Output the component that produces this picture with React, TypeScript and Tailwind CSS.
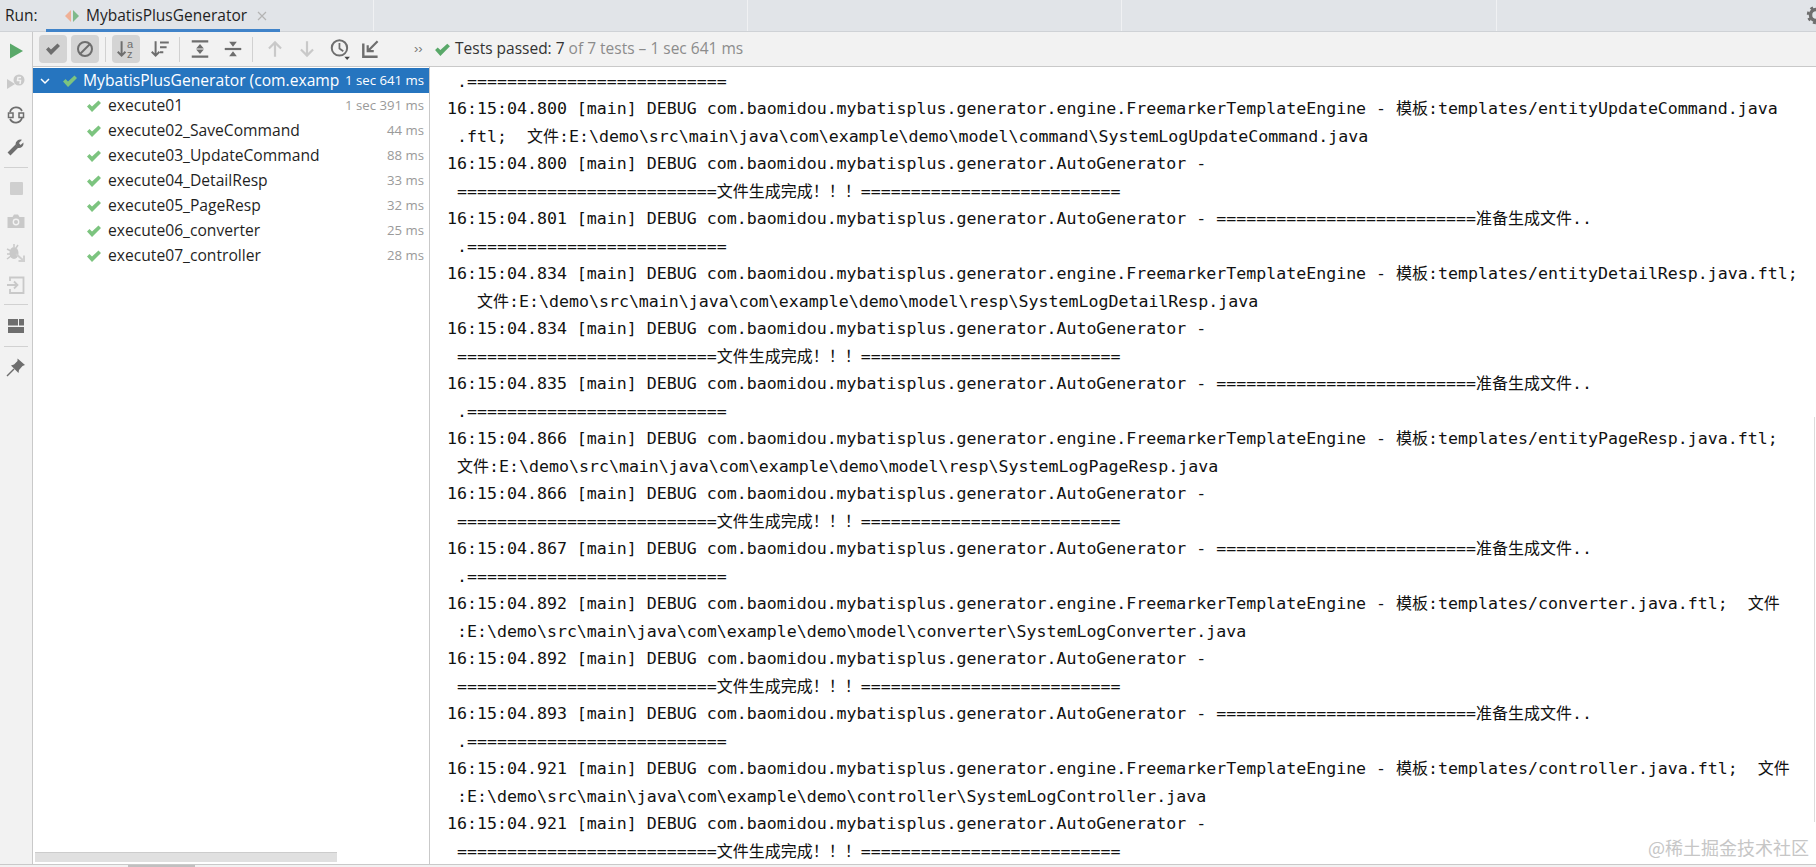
import React from 'react';

const EQ = '='.repeat(26);
const PKG = '[main] DEBUG com.baomidou.mybatisplus.generator';

const engine = (time: string, rest: string) =>
  `16:15:04.${time} ${PKG}.engine.FreemarkerTemplateEngine - 模板:templates/${rest}`;
const auto = (time: string) => `16:15:04.${time} ${PKG}.AutoGenerator - `;
const done = ` ${EQ}文件生成完成！！！${EQ}`;
const prepare = (time: string) => `16:15:04.${time} ${PKG}.AutoGenerator - ${EQ}准备生成文件..`;
const dots = ` .${EQ}`;

const LOG_LINES: string[] = [
  dots,
  engine('800', 'entityUpdateCommand.java'),
  ' .ftl;  文件:E:\\demo\\src\\main\\java\\com\\example\\demo\\model\\command\\SystemLogUpdateCommand.java',
  auto('800'),
  done,
  prepare('801'),
  dots,
  engine('834', 'entityDetailResp.java.ftl;'),
  '   文件:E:\\demo\\src\\main\\java\\com\\example\\demo\\model\\resp\\SystemLogDetailResp.java',
  auto('834'),
  done,
  prepare('835'),
  dots,
  engine('866', 'entityPageResp.java.ftl;'),
  ' 文件:E:\\demo\\src\\main\\java\\com\\example\\demo\\model\\resp\\SystemLogPageResp.java',
  auto('866'),
  done,
  prepare('867'),
  dots,
  engine('892', 'converter.java.ftl;  文件'),
  ' :E:\\demo\\src\\main\\java\\com\\example\\demo\\model\\converter\\SystemLogConverter.java',
  auto('892'),
  done,
  prepare('893'),
  dots,
  engine('921', 'controller.java.ftl;  文件'),
  ' :E:\\demo\\src\\main\\java\\com\\example\\demo\\controller\\SystemLogController.java',
  auto('921'),
  done,
];

const TESTS: [string, string][] = [
  ['execute01', '1 sec 391 ms'],
  ['execute02_SaveCommand', '44 ms'],
  ['execute03_UpdateCommand', '88 ms'],
  ['execute04_DetailResp', '33 ms'],
  ['execute05_PageResp', '32 ms'],
  ['execute06_converter', '25 ms'],
  ['execute07_controller', '28 ms'],
];

const Check = ({ size = 16, color = '#59a869' }: { size?: number; color?: string }) => (
  <svg width={size} height={size} viewBox="0 0 16 16" className="shrink-0">
    <path d="M1 8.5 L3.5 6 L6 8.5 L12.5 2.5 L15 5 L6 14 Z" fill={color} />
  </svg>
);

const Icon = ({ children, w = 20 }: { children: React.ReactNode; w?: number }) => (
  <svg width={w} height={w} viewBox="0 0 20 20" fill="none" className="shrink-0">
    {children}
  </svg>
);

const GRAY = '#6e6e6e';
const FADED = '#c9c9c9';

const Divider = () => <div className="w-6 h-px bg-[#d1d1d1]" />;
const ToolDivider = () => <div className="w-px h-[25px] bg-[#d1d1d1] shrink-0" />;

// log text is mono, the CJK runs come out a bit smaller in the original
const LogLine = ({ text }: { text: string }) => (
  <div className="whitespace-pre text-[16.6px] leading-[27.5px] text-[#111] font-['DejaVu_Sans_Mono','Noto_Sans_CJK_SC',monospace]">
    {text.split(/([\u4e00-\u9fff！]+)/).map((part, i) =>
      i % 2 === 1 ? (
        <span key={i} className="text-[16px]">
          {part}
        </span>
      ) : (
        part
      )
    )}
  </div>
);

const SideBar = () => (
  <div className="w-[33px] shrink-0 bg-[#f2f2f2] border-r border-[#c9c9c9] flex flex-col items-center pt-[2px]">
    <div className="h-[33px] flex items-center">
      <Icon><path d="M4 2.5 L17 10 L4 17.5 Z" fill="#59a869" /></Icon>
    </div>
    <div className="h-[32px] flex items-center">
      <Icon>
        <path d="M1 6 L9 11 L1 16 Z" fill={FADED} />
        <circle cx="13" cy="7" r="5.5" fill={FADED} />
        <path d="M15 4.5 L12 4.5 L11.5 7.5 L14.5 7.5 L14 11" stroke="#f2f2f2" strokeWidth="1.5" />
      </Icon>
    </div>
    <div className="h-[32px] flex items-center">
      <Icon>
        <path d="M4 7 A6.5 6.5 0 0 1 16 6" stroke={GRAY} strokeWidth="1.8" />
        <path d="M16 13 A6.5 6.5 0 0 1 4 14" stroke={GRAY} strokeWidth="1.8" />
        <rect x="2.5" y="8" width="4.5" height="4.5" stroke={GRAY} strokeWidth="1.5" />
        <rect x="13" y="8" width="4.5" height="4.5" stroke={GRAY} strokeWidth="1.5" />
      </Icon>
    </div>
    <div className="h-[32px] flex items-center">
      <Icon>
        <path d="M3 17 L11 9" stroke={GRAY} strokeWidth="4" />
        <path d="M9.5 7.5 A4.8 4.8 0 0 1 16 2.8 L13 6 L14.5 8 L17.5 5.5 A4.8 4.8 0 0 1 12 11 Z" fill={GRAY} />
      </Icon>
    </div>
    <div className="my-[4px]"><Divider /></div>
    <div className="h-[32px] flex items-center">
      <div className="w-[13px] h-[13px] bg-[#cfcfcf] rounded-[1px]" />
    </div>
    <div className="h-[33px] flex items-center">
      <Icon>
        <path d="M1.5 6 H6.5 L8 3.5 H12 L13.5 6 H18.5 V17 H1.5 Z" fill={FADED} />
        <circle cx="10" cy="11" r="3.4" fill="#f2f2f2" />
        <circle cx="10" cy="11" r="2" fill={FADED} />
      </Icon>
    </div>
    <div className="h-[32px] flex items-center">
      <Icon>
        <ellipse cx="8" cy="10" rx="4.5" ry="6" fill={FADED} />
        <path d="M1 6 L5 8 M1 11 H4 M1 16 L5 13 M8 1 V4 M12 2 L10 5" stroke={FADED} strokeWidth="1.5" />
        <path d="M10 11 L18 18 M18 12.5 V18 H12.5" stroke="#d0d0d0" strokeWidth="2" />
      </Icon>
    </div>
    <div className="h-[32px] flex items-center">
      <Icon>
        <path d="M4 6 V2.5 H17.5 V18 H4 V14" stroke={FADED} strokeWidth="1.8" />
        <path d="M1 10 H11 M8 6.5 L11.5 10 L8 13.5" stroke={FADED} strokeWidth="1.8" />
      </Icon>
    </div>
    <div className="my-[3px]"><Divider /></div>
    <div className="h-[36px] flex items-center">
      <Icon>
        <rect x="2" y="3" width="10" height="6.5" fill={GRAY} />
        <rect x="13" y="3" width="5" height="6.5" fill={GRAY} />
        <rect x="2" y="11" width="16" height="6" fill={GRAY} />
      </Icon>
    </div>
    <div className="my-[2px]"><Divider /></div>
    <div className="h-[36px] flex items-center">
      <Icon>
        <path d="M11.5 1.5 L19 8 L16.5 9 L13 13 L12.5 16 L5 8.5 L8 7.5 L11.5 4 Z" fill={GRAY} />
        <path d="M1 19 L8 12" stroke={GRAY} strokeWidth="1.5" />
      </Icon>
    </div>
  </div>
);

const ToolBar = () => (
  <div className="h-[35px] bg-[#f2f2f2] border-b border-[#c9c9c9] flex items-center pl-[6px] shrink-0">
    <div className="w-[28px] h-[28px] rounded-[4px] bg-[#d4d4d4] flex items-center justify-center">
      <Check size={16} color={GRAY} />
    </div>
    <div className="w-[28px] h-[28px] rounded-[4px] bg-[#d4d4d4] flex items-center justify-center ml-[4px]">
      <Icon>
        <circle cx="10" cy="10" r="7" stroke={GRAY} strokeWidth="2" />
        <path d="M5 15 L15 5" stroke={GRAY} strokeWidth="2" />
      </Icon>
    </div>
    <div className="ml-[6px] mr-[6px]"><ToolDivider /></div>
    <div className="w-[28px] h-[28px] rounded-[4px] bg-[#d4d4d4] flex items-center justify-center">
      <Icon w={22}>
        <path d="M6 3 V16 M2.5 12.5 L6 16 L9.5 12.5" stroke={GRAY} strokeWidth="1.8" />
        <text x="11" y="9" fontSize="10" fill={GRAY} fontFamily="'Liberation Sans', sans-serif">a</text>
        <text x="11" y="18" fontSize="10" fill={GRAY} fontFamily="'Liberation Sans', sans-serif">z</text>
      </Icon>
    </div>
    <div className="w-[28px] h-[28px] flex items-center justify-center ml-[6px]">
      <Icon w={22}>
        <path d="M6 3 V16 M2.5 12.5 L6 16 L9.5 12.5" stroke={GRAY} strokeWidth="1.8" />
        <path d="M10 4 H18 M10 8.5 H16 M10 13 H13" stroke={GRAY} strokeWidth="1.8" />
      </Icon>
    </div>
    <div className="ml-[5px] mr-[6px]"><ToolDivider /></div>
    <div className="w-[28px] h-[28px] flex items-center justify-center">
      <Icon w={22}>
        <path d="M2.5 3 H17.5 M2.5 17 H17.5" stroke={GRAY} strokeWidth="2" />
        <path d="M10 5.5 L6.5 9.5 H13.5 Z M10 14.5 L6.5 10.5 H13.5 Z" fill={GRAY} />
      </Icon>
    </div>
    <div className="w-[28px] h-[28px] flex items-center justify-center ml-[5px]">
      <Icon w={22}>
        <path d="M2.5 10 H17.5" stroke={GRAY} strokeWidth="2" />
        <path d="M10 8 L6.5 3.5 H13.5 Z M10 12 L6.5 16.5 H13.5 Z" fill={GRAY} />
      </Icon>
    </div>
    <div className="ml-[5px] mr-[8px]"><ToolDivider /></div>
    <div className="w-[28px] h-[28px] flex items-center justify-center">
      <Icon w={22}>
        <path d="M10 17 V4 M4.5 9.5 L10 4 L15.5 9.5" stroke={FADED} strokeWidth="2" />
      </Icon>
    </div>
    <div className="w-[28px] h-[28px] flex items-center justify-center ml-[4px]">
      <Icon w={22}>
        <path d="M10 3 V16 M4.5 10.5 L10 16 L15.5 10.5" stroke={FADED} strokeWidth="2" />
      </Icon>
    </div>
    <div className="w-[28px] h-[28px] flex items-center justify-center ml-[5px]">
      <Icon w={22}>
        <circle cx="9.5" cy="9" r="7" stroke={GRAY} strokeWidth="1.8" />
        <path d="M9.5 4.5 V9.5 L13 12" stroke={GRAY} strokeWidth="1.6" />
        <path d="M14 17 H19 L16.5 20 Z" fill="#444" />
      </Icon>
    </div>
    <div className="w-[28px] h-[28px] flex items-center justify-center ml-[3px]">
      <Icon w={22}>
        <path d="M3 5 V17 H16" stroke={GRAY} strokeWidth="2.2" />
        <path d="M16 3 L7 12 M7 6.5 V12 H12.5" stroke={GRAY} strokeWidth="2" />
      </Icon>
    </div>
    <span className="ml-[29px] w-[20px] text-[13px] text-[#777] font-['Liberation_Sans',sans-serif]">››</span>
    <Check size={17} color="#59a869" />
    <span className="ml-[4px] text-[15.5px] text-[#333] font-['Open_Sans',sans-serif] whitespace-pre">
      Tests passed: 7 <span className="text-[#8c8c8c]">of 7 tests – 1 sec 641 ms</span>
    </span>
  </div>
);

const TestTree = () => (
  <div className="relative w-[397px] shrink-0 bg-white border-r border-[#c9c9c9] font-['Open_Sans',sans-serif] text-[15.65px]">
    <div className="h-[25px] bg-[#2675bf] flex items-center pl-[6px] pr-[5px] text-white mt-px">
      <svg width="12" height="12" viewBox="0 0 12 12" className="shrink-0">
        <path d="M2 4 L6 8 L10 4" fill="none" stroke="#fff" strokeWidth="1.5" />
      </svg>
      <div className="ml-[11px]"><Check size={16} color="#7cc47f" /></div>
      <span className="ml-[5px] pt-px whitespace-nowrap overflow-hidden flex-1">MybatisPlusGenerator (com.examp</span>
      <span className="text-[13.2px] pt-px whitespace-nowrap">1 sec 641 ms</span>
    </div>
    {TESTS.map(([name, time]) => (
      <div key={name} className="h-[25px] flex items-center pl-[53px] pr-[5px]">
        <Check size={16} color="#7cc47f" />
        <span className="ml-[6px] flex-1 text-[#1f1f1f] whitespace-nowrap">{name}</span>
        <span className="text-[13.2px] text-[#9a9a9a] whitespace-nowrap">{time}</span>
      </div>
    ))}
    <div className="absolute left-[2px] bottom-[2px] w-[302px] h-[10px] bg-[#e0e0e0] border-t border-[#cccccc]" />
  </div>
);

const LogView = () => (
  <div className="relative flex-1 min-w-0 bg-white overflow-hidden pl-[17px] pt-[0.5px]">
    {LOG_LINES.map((line, i) => (
      <LogLine key={i} text={line} />
    ))}
    <div className="absolute right-[7px] bottom-[3px] text-[18px] text-[#c6c6c6] font-['Noto_Sans_CJK_SC',sans-serif]">
      @稀土掘金技术社区
    </div>
    <div className="absolute right-[1px] top-[350px] h-[405px] w-px bg-[#dcdcdc]" />
  </div>
);

export default function App() {
  return (
    <div className="w-[1816px] h-[867px] overflow-hidden flex flex-col bg-white">
      <div className="relative h-[32px] shrink-0 bg-[#e1e4e8] border-b border-[#cfd2d6] flex">
        <div className="w-[374px] shrink-0 border-r border-[#f0f1f3] flex items-center font-['Open_Sans',sans-serif] text-[15.5px] text-[#1f1f1f]">
          <span className="ml-[5px] w-[41px]">Run:</span>
          <div className="relative w-[234px] h-[32px] flex items-center pl-[18px]">
            <svg width="16" height="16" viewBox="0 0 16 16" className="shrink-0">
              <path d="M7 2 L1 8 L7 14 Z" fill="#efb096" />
              <path d="M9 2 L15 8 L9 14 Z" fill="#7fb98a" />
            </svg>
            <span className="ml-[6px]">MybatisPlusGenerator</span>
            <svg width="10" height="10" viewBox="0 0 10 10" className="ml-[10px] shrink-0">
              <path d="M1 1 L9 9 M9 1 L1 9" stroke="#b4b4b4" strokeWidth="1.2" />
            </svg>
            <div className="absolute left-0 right-0 bottom-0 h-[3px] bg-[#4083c9]" />
          </div>
        </div>
        <div className="w-[374px] shrink-0 border-r border-[#f0f1f3]" />
        <div className="w-[374px] shrink-0 border-r border-[#f0f1f3]" />
        <div className="w-[375px] shrink-0 border-r border-[#f0f1f3]" />
        <svg width="20" height="20" viewBox="0 0 20 20" className="absolute right-[-10px] top-[5px]">
          <circle cx="10" cy="10" r="5.5" fill="none" stroke="#6e6e6e" strokeWidth="3.5" />
          <circle cx="10" cy="10" r="8" fill="none" stroke="#6e6e6e" strokeWidth="2.4" strokeDasharray="3 3.3" />
        </svg>
      </div>
      <div className="flex-1 min-h-0 flex">
        <SideBar />
        <div className="flex-1 min-w-0 flex flex-col">
          <ToolBar />
          <div className="flex-1 min-h-0 flex">
            <TestTree />
            <LogView />
          </div>
        </div>
      </div>
      <div className="h-[3px] shrink-0 bg-[#f2f2f2] border-t border-[#c9c9c9] pl-[128px]">
        <div className="w-[67px] h-[2px] bg-[#c0c0c0]" />
      </div>
    </div>
  );
}
